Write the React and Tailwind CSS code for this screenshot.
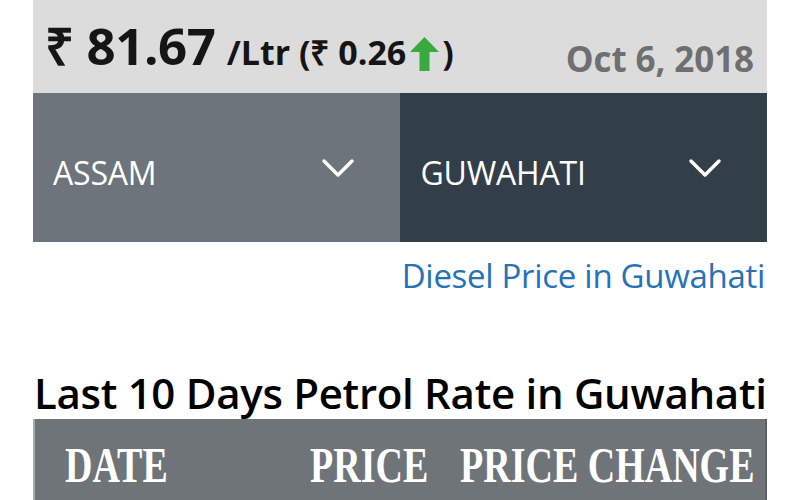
import React from 'react';

function Chevron() {
  return (
    <svg width="34" height="22" viewBox="0 0 34 22" fill="none" stroke="white" strokeWidth="3.5" strokeLinecap="round" strokeLinejoin="round">
      <path d="M3 4 L17 18 L31 4" />
    </svg>
  );
}

function Select({ label, bg, pad }) {
  return (
    <div className={`flex-1 h-full flex items-center justify-between ${bg} ${pad}`}>
      <span className="text-[32px] text-white tracking-[-0.2px] mt-[10px]">{label}</span>
      <Chevron />
    </div>
  );
}

export default function App() {
  return (
    <div className="w-[800px] h-[500px] overflow-hidden bg-white font-['Open_Sans',sans-serif]">
      <div className="mx-[33px] w-[734px]">
        {/* price bar */}
        <div className="h-[93px] bg-[#dcdcdc] flex items-end justify-between pl-[12px] pr-[13px] pb-[22px]">
          <div className="flex items-baseline text-[#151515] font-bold">
            <span className="text-[51px] leading-none tracking-[-0.4px]">₹ 81.67</span>
            <span className="text-[34px] leading-none ml-[11px] tracking-[0px]">/Ltr (₹ 0.26</span>
            <svg width="31" height="36" viewBox="0 0 31 36" className="self-end mb-[-1px] ml-[3px]">
              <path d="M15.5 1 L1 16 L10.5 16 L10.5 35 L20.5 35 L20.5 16 L30 16 Z" fill="#3aaa3f" />
            </svg>
            <span className="text-[34px] leading-none ml-[2px]">)</span>
          </div>
          <span className="text-[35px] leading-none font-bold text-[#6f6f6f] tracking-[-0.1px] mb-[-5px]">Oct 6, 2018</span>
        </div>

        {/* selects */}
        <div className="h-[149px] flex">
          <Select label="ASSAM" bg="bg-[#6d747b]" pad="pl-[20px] pr-[45px]" />
          <Select label="GUWAHATI" bg="bg-[#323e48]" pad="pl-[21px] pr-[45px]" />
        </div>

        {/* link */}
        <div className="flex justify-end pt-[13px] pr-[2px]">
          <a className="text-[33px] text-[#2672b8] tracking-[-0.3px] leading-[42px]">Diesel Price in Guwahati</a>
        </div>

        {/* heading */}
        <h2 className="mt-[72px] text-[42px] font-semibold text-black leading-[48px] tracking-[-0.3px] ml-[1px] whitespace-nowrap">
          Last 10 Days Petrol Rate in Guwahati
        </h2>

        {/* table header */}
        <div className="mt-[2px] h-[90px] bg-[#6e7478] border-l-2 border-[#a9adb0] border-r-2 border-r-[#5b6064] flex items-start pt-[21px] text-white font-['Liberation_Serif',serif] font-bold">
          <div className="w-[275px] shrink-0 pl-[30px]">
            <span className="inline-block text-[50px] leading-none scale-x-[0.76] origin-left">DATE</span>
          </div>
          <div className="w-[150px] shrink-0">
            <span className="inline-block text-[50px] leading-none scale-x-[0.76] origin-left">PRICE</span>
          </div>
          <div className="flex-1 min-w-0">
            <span className="inline-block text-[50px] leading-none scale-x-[0.76] origin-left whitespace-nowrap">PRICE CHANGE</span>
          </div>
        </div>
      </div>
    </div>
  );
}
